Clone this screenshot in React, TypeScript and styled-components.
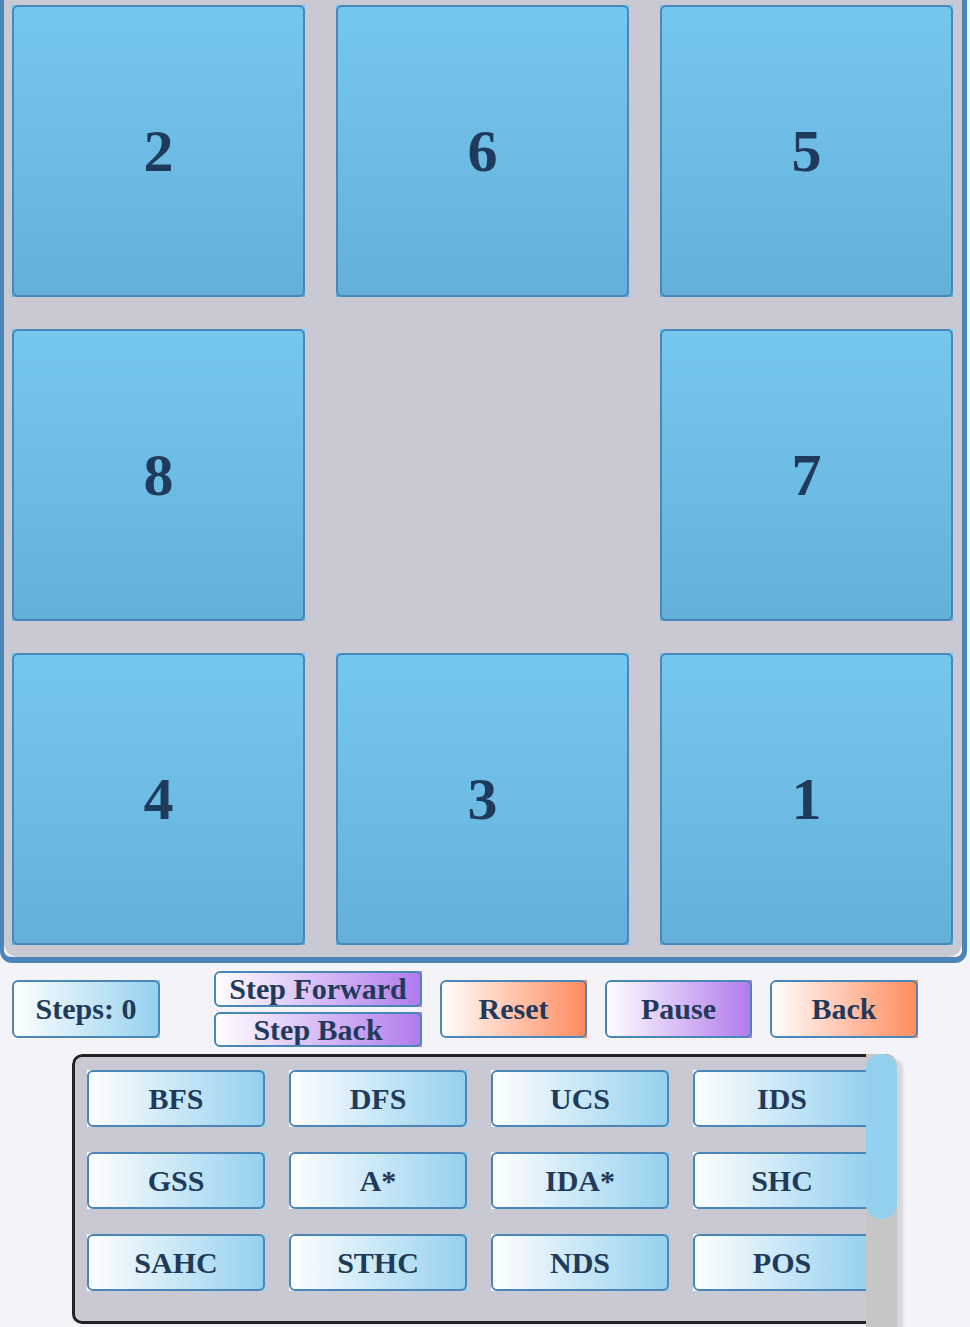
import React from 'react';
import styled, { createGlobalStyle, css } from 'styled-components';

const GlobalStyle = createGlobalStyle`
    html, body {
        margin: 0;
        padding: 0;
        overflow: hidden;
        background: #f4f4f8;
        font-family: "Liberation Serif", "Times New Roman", serif;
    }
`

type Tone = 'blue' | 'purple' | 'orange'

const gradients: Record<Tone, string> = {
    blue: 'linear-gradient(to right, #ffffff 0%, #93d0ee 100%)',
    purple: 'linear-gradient(to right, #ffffff 0%, #b07aec 100%)',
    orange: 'linear-gradient(to right, #ffffff 0%, #ff8a5c 100%)',
}

// square background with a rounded border laid over it
const framed = css`
    position: relative;
    &::after {
        content: '';
        position: absolute;
        inset: 0;
        border: 2px solid #4a86b8;
        border-radius: 6px;
        pointer-events: none;
    }
`

const Page = styled.div`
    width: 970px;
    display: flex;
    flex-direction: column;
`

const Board = styled.div`
    width: 958px;
    border: 5px solid #4a84b8;
    border-left-width: 4px;
    border-bottom-width: 6px;
    border-top: none;
    border-radius: 0 0 12px 12px;
    background: #f6f6fa;
`

const BoardGrid = styled.div`
    display: grid;
    grid-template-columns: repeat(3, 293px);
    grid-auto-rows: 292px;
    column-gap: 31px;
    row-gap: 32px;
    padding: 5px 9px 12px 8px;
    background: #c8c9d2;
    border-radius: 0 0 14px 14px;
`

const Tile = styled.div<{ $empty?: boolean }>`
    ${framed}
    display: flex;
    align-items: center;
    justify-content: center;
    background: linear-gradient(to bottom, #76c7ef, #63b1da);
    color: #1f3a5a;
    font-size: 60px;
    font-weight: bold;
    ${p => p.$empty && css`
        background: transparent;
        &::after { display: none; }
    `}
`

const Controls = styled.div`
    display: flex;
    align-items: center;
    gap: 18px;
    padding: 8px 0 0 12px;
    height: 76px;
`

const Btn = styled.div<{ $tone: Tone; $w?: number; $h?: number }>`
    ${framed}
    flex: none;
    width: ${p => p.$w ?? 148}px;
    height: ${p => p.$h ?? 58}px;
    display: flex;
    align-items: center;
    justify-content: center;
    background: ${p => gradients[p.$tone]};
    color: #1f3a5a;
    font-size: 30px;
    font-weight: bold;
    white-space: nowrap;
    box-sizing: border-box;
`

const StepColumn = styled.div`
    display: flex;
    flex-direction: column;
    gap: 5px;
    margin-left: 36px;
`

const AlgoBox = styled.div`
    position: relative;
    margin: 7px 0 0 72px;
    width: 825px;
    height: 273px;
    overflow: hidden;
    border-radius: 10px 12px 0 10px;
    box-shadow: 6px 4px 3px rgba(0, 0, 0, 0.12);
`

const AlgoPanel = styled.div`
    width: 830px;
    height: 270px;
    box-sizing: border-box;
    border: 3px solid #222;
    border-radius: 10px;
    background: #c8c9d2;
    padding: 13px 12px 0 12px;
    display: grid;
    grid-template-columns: repeat(4, 178px);
    grid-auto-rows: 57px;
    column-gap: 24px;
    row-gap: 25px;
`

// drawn scrollbar laid over the right side of the panel
const Track = styled.div`
    position: absolute;
    top: 0;
    right: 0;
    bottom: 0;
    width: 31px;
    background: #c6c6c6;
`

const Thumb = styled.div`
    height: 165px;
    border-radius: 16px;
    background: #93d0ed;
`

const tiles = ['2', '6', '5', '8', '', '7', '4', '3', '1']
const algorithms = ['BFS', 'DFS', 'UCS', 'IDS', 'GSS', 'A*', 'IDA*', 'SHC', 'SAHC', 'STHC', 'NDS', 'POS']

const App: React.FC = () => {
    return (
        <Page>
            <GlobalStyle />
            <Board>
                <BoardGrid>
                    {tiles.map((t, i) => (
                        <Tile key={i} $empty={t === ''}>{t}</Tile>
                    ))}
                </BoardGrid>
            </Board>

            <Controls>
                <Btn $tone='blue'>Steps: 0</Btn>
                <StepColumn>
                    <Btn $tone='purple' $w={208} $h={36}>Step Forward</Btn>
                    <Btn $tone='purple' $w={208} $h={35}>Step Back</Btn>
                </StepColumn>
                <Btn $tone='orange' $w={147}>Reset</Btn>
                <Btn $tone='purple' $w={147}>Pause</Btn>
                <Btn $tone='orange'>Back</Btn>
            </Controls>

            <AlgoBox>
                <AlgoPanel>
                    {algorithms.map(a => (
                        <Btn key={a} $tone='blue' $w={178} $h={57}>{a}</Btn>
                    ))}
                </AlgoPanel>
                <Track>
                    <Thumb />
                </Track>
            </AlgoBox>
        </Page>
    );
};

export default App;
